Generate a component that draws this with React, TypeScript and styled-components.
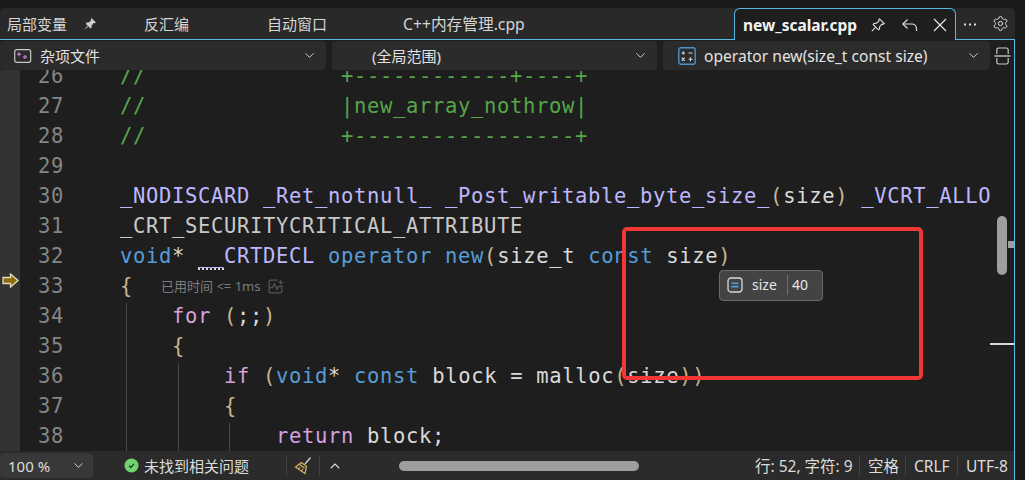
import React from "react";
import styled, { createGlobalStyle } from "styled-components";
import { ChevronDown, ChevronUp, Settings } from "lucide-react";

const Global = createGlobalStyle`
  html, body { margin: 0; padding: 0; background: #1b1b1b; }
  * { box-sizing: border-box; }
`;

const UI = `"Noto Sans", "Noto Sans CJK SC", sans-serif`;
const BLUE = "#56b8e6";

const Window = styled.div`
  width: 1025px;
  height: 480px;
  overflow: hidden;
  background: #1b1b1b;
  padding-top: 8px;
  display: flex;
  flex-direction: column;
  font-family: ${UI};
  color: #e6e6e6;
`;

const TabBar = styled.div`
  height: 31px;
  margin-right: 10px;
  background: #292929;
  border-radius: 6px 6px 0 0;
  display: flex;
  align-items: center;
  padding-left: 7px;
  position: relative;
  z-index: 3;
`;

const ToolTab = styled.div<{ $offset: number; $size?: number }>`
  margin-left: ${(p) => p.$offset}px;
  display: flex;
  align-items: center;
  gap: 16px;
  font-size: ${(p) => p.$size ?? 15}px;
  color: #d6d6d6;
  white-space: nowrap;
`;

const ActiveTab = styled.div`
  position: absolute;
  left: 734px;
  top: 0;
  width: 222px;
  height: 32px;
  background: #1e1e1e;
  border: 1px solid ${BLUE};
  border-bottom: none;
  border-radius: 6px 6px 0 0;
  display: flex;
  align-items: center;
  padding-left: 8px;
  font-size: 15.5px;
  font-weight: 700;
  color: #f2f2f2;
`;

const TabTitle = styled.span`
  width: 127px;
  white-space: nowrap;
`;

const TabIcons = styled.div`
  display: flex;
  align-items: center;
  gap: 15px;
`;

const BarIcons = styled.div`
  position: absolute;
  left: 963px;
  top: 7px;
  display: flex;
  align-items: center;
  gap: 15px;
`;

const Panel = styled.div`
  flex: 1;
  min-height: 0;
  margin-right: 10px;
  border-top: 1px solid ${BLUE};
  border-right: 1px solid ${BLUE};
  display: flex;
  flex-direction: column;
  background: #1e1e1e;
`;

const NavBar = styled.div`
  height: 30px;
  flex: none;
  display: flex;
  gap: 6px;
  background: #1e1e1e;
  position: relative;
  z-index: 2;
  padding-top: 1px;
`;

const NavBox = styled.div<{ $width: number; $pad: number; $size?: number }>`
  width: ${(p) => p.$width}px;
  flex: none;
  height: 29px;
  background: #2b2b2b;
  border-radius: 4px;
  display: flex;
  align-items: center;
  gap: 8px;
  padding: 0 9px 0 ${(p) => p.$pad}px;
  font-size: ${(p) => p.$size ?? 15}px;
  color: #e2e2e2;
  white-space: nowrap;
`;

const NavLabel = styled.span`
  flex: 1;
`;

const Split = styled.div`
  display: flex;
  align-items: center;
  margin-left: -2px;
`;

const Editor = styled.div`
  flex: 1;
  min-height: 0;
  position: relative;
  overflow: hidden;
  background: #1e1e1e;
`;

const Margin = styled.div`
  position: absolute;
  left: 0;
  top: 0;
  bottom: 0;
  width: 20px;
  background: #333333;
`;

const Lines = styled.div`
  width: 992px;
  margin-top: -9px;
  overflow: hidden;
  font-family: "DejaVu Sans Mono", monospace;
  font-size: 20.5px;
  letter-spacing: 0.66px;
  position: relative;
`;

const Line = styled.div`
  height: 30px;
  line-height: 30px;
  display: flex;
  white-space: pre;
`;

const LineNo = styled.span`
  width: 64px;
  flex: none;
  text-align: right;
  color: #858585;
  letter-spacing: 0.66px;
`;

const Code = styled.span`
  margin-left: 56px;
  color: #dadada;
`;

const Tok = styled.span<{ $c: string }>`
  color: ${(p) => p.$c};
`;

const Squiggle = styled.span`
  color: #beb7ff;
  border-bottom: 2px dotted #dadada;
`;

const Hint = styled.span`
  margin-left: 28px;
  font-family: ${UI};
  font-size: 13px;
  letter-spacing: 0;
  color: #7d7d7d;
  display: inline-flex;
  align-items: center;
  gap: 7px;
  height: 30px;
  vertical-align: top;
`;

const Guide = styled.div<{ $x: number; $top: number }>`
  position: absolute;
  left: ${(p) => p.$x}px;
  top: ${(p) => p.$top}px;
  bottom: 0;
  width: 1px;
  background: #474747;
`;

const DebugArrow = styled.svg`
  position: absolute;
  left: 2px;
  top: 203px;
`;

const Tooltip = styled.div`
  position: absolute;
  left: 719px;
  top: 200px;
  width: 104px;
  height: 31px;
  background: #434343;
  border: 1px solid #6a6a6a;
  border-radius: 4px;
  display: flex;
  align-items: center;
  padding: 0 0 2px 7px;
  font-size: 14px;
  color: #e8e8e8;
`;

const TipName = styled.span`
  margin-left: 9px;
  width: 35px;
`;

const TipValue = styled.span`
  border-left: 1px solid #6e6e6e;
  padding-left: 4px;
  line-height: 20px;
`;

const RedBox = styled.div`
  position: absolute;
  left: 622px;
  top: 157px;
  width: 301px;
  height: 153px;
  border: 4px solid #f23535;
  border-radius: 5px;
  z-index: 2;
`;

const ThumbV = styled.div`
  position: absolute;
  left: 997px;
  top: 146px;
  width: 10px;
  height: 59px;
  border-radius: 5px;
  background: #9e9e9e;
`;

const Mark = styled.div<{ $x: number; $y: number; $w: number; $h: number; $c: string }>`
  position: absolute;
  left: ${(p) => p.$x}px;
  top: ${(p) => p.$y}px;
  width: ${(p) => p.$w}px;
  height: ${(p) => p.$h}px;
  background: ${(p) => p.$c};
`;

const StatusBar = styled.div`
  height: 29px;
  flex: none;
  background: #2b2b2b;
  display: flex;
  align-items: center;
  font-size: 15px;
  color: #dcdcdc;
  white-space: nowrap;
`;

const Zoom = styled.div`
  width: 93px;
  height: 25px;
  background: #383838;
  border-radius: 4px;
  display: flex;
  align-items: center;
  justify-content: space-between;
  padding: 0 7px 0 8px;
  margin-right: 31px;
`;

const Problems = styled.div`
  display: flex;
  align-items: center;
  gap: 5px;
  width: 162px;
`;

const Divider = styled.div`
  width: 1px;
  height: 20px;
  background: #424242;
`;

const Tool = styled.div<{ $w: number }>`
  width: ${(p) => p.$w}px;
  display: flex;
  align-items: center;
  justify-content: center;
`;

const HScroll = styled.div`
  width: 240px;
  height: 10px;
  border-radius: 5px;
  background: #9e9e9e;
  margin-left: 49px;
`;

const StatusRight = styled.div`
  margin-left: auto;
  display: flex;
  align-items: center;
  font-size: 15.5px;
`;

const StatusItem = styled.div<{ $w: number }>`
  width: ${(p) => p.$w}px;
  height: 20px;
  line-height: 20px;
  padding-left: 8px;
  & + & {
    border-left: 1px solid #424242;
  }
`;

const C = {
  com: "#57a64a",
  mac: "#beb7ff",
  kw: "#569cd6",
  ctl: "#d8a0df",
  par: "#c9b48f",
  id: "#dadada",
  dim: "#c8c8c8",
};

const P = ({ children }: { children: React.ReactNode }) => <Tok $c={C.par}>{children}</Tok>;

const lines: [number, React.ReactNode][] = [
  [26, <Tok $c={C.com}>{"//               +------------+----+"}</Tok>],
  [27, <Tok $c={C.com}>{"//               |new_array_nothrow|"}</Tok>],
  [28, <Tok $c={C.com}>{"//               +-----------------+"}</Tok>],
  [29, ""],
  [30, <>
    <Tok $c={C.mac}>_NODISCARD _Ret_notnull_ _Post_writable_byte_size_</Tok>
    <P>(</P>size<P>)</P> <Tok $c={C.mac}>_VCRT_ALLOCATOR</Tok>
  </>],
  [31, <Tok $c={C.dim}>_CRT_SECURITYCRITICAL_ATTRIBUTE</Tok>],
  [32, <>
    <Tok $c={C.kw}>void</Tok><Tok $c={C.id}>* </Tok><Squiggle>__</Squiggle><Tok $c={C.mac}>CRTDECL</Tok>{" "}
    <Tok $c={C.kw}>operator new</Tok><P>(</P>size_t <Tok $c={C.kw}>const</Tok> size<P>)</P>
  </>],
  [33, <>
    <P>{"{"}</P>
    <Hint>
      已用时间 {"<="} 1ms
      <svg width="18" height="17" viewBox="0 0 17 16" fill="none" stroke="#555" strokeWidth="1.2">
        <path d="M10 2H3.5Q2 2 2 3.5V12.5Q2 14 3.5 14H12.5Q14 14 14 12.5V9" />
        <path d="M2 9H5L7 5.5L9.5 10.5L11 8H15" />
        <path d="M13 1L13.7 3.3L16 4L13.7 4.7L13 7L12.3 4.7L10 4L12.3 3.3Z" fill="#555" stroke="none" />
      </svg>
    </Hint>
  </>],
  [34, <>{"    "}<Tok $c={C.ctl}>for</Tok> <P>(</P><Tok $c={C.id}>;;</Tok><P>)</P></>],
  [35, <>{"    "}<P>{"{"}</P></>],
  [36, <>
    {"        "}<Tok $c={C.ctl}>if</Tok> <P>(</P><Tok $c={C.kw}>void</Tok>* <Tok $c={C.kw}>const</Tok> block = malloc<P>(</P>size<P>))</P>
  </>],
  [37, <>{"        "}<P>{"{"}</P></>],
  [38, <>{"            "}<Tok $c={C.ctl}>return</Tok> block;</>],
];

const Chevron = () => <ChevronDown size={15} strokeWidth={1.6} color="#d0d0d0" />;

const FilledPin = () => (
  <svg width="14" height="14" viewBox="0 0 14 14" fill="#cfcfcf">
    <path d="M8.5 1L13 5.5L11.7 6.3L10.6 6L8.6 8.8L8.6 10.6L7.4 11.4L2.8 6.8L3.6 5.6L5.4 5.6L8.1 3.4L7.8 2.3Z" />
    <path d="M4.2 9L1 13L5 9.8Z" />
  </svg>
);

const OutlinePin = () => (
  <svg width="16" height="16" viewBox="0 0 16 16" fill="none" stroke="#dcdcdc" strokeWidth="1.1">
    <path d="M9.5 1.8L14.2 6.5L13 7.4L11.8 7.1L9.5 10L9.6 12L8.4 12.8L3.2 7.6L4 6.4L6 6.5L8.9 4.2L8.6 3Z" />
    <path d="M5.6 10.4L1.8 14.2" />
  </svg>
);

const Undo = () => (
  <svg width="17" height="16" viewBox="0 0 17 16" fill="none" stroke="#dcdcdc" strokeWidth="1.2">
    <path d="M6.5 2.5L1.8 7L6.5 11.5" />
    <path d="M2 7H10.5Q15.5 7 15.5 12V14" />
  </svg>
);

const Close = () => (
  <svg width="14" height="14" viewBox="0 0 14 14" fill="none" stroke="#e4e4e4" strokeWidth="1.2">
    <path d="M1 1L13 13M13 1L1 13" />
  </svg>
);

const Dots = () => (
  <svg width="14" height="14" viewBox="0 0 14 14" fill="#dcdcdc">
    <rect x="1" y="6.5" width="2" height="2" />
    <rect x="6" y="6.5" width="2" height="2" />
    <rect x="11" y="6.5" width="2" height="2" />
  </svg>
);

const MiscIcon = () => (
  <svg width="18" height="14" viewBox="0 0 18 14" fill="none">
    <rect x="0.7" y="0.7" width="16" height="12.6" rx="2" stroke="#c8c8c8" strokeWidth="1.2" />
    <path d="M5 3.2V7.2M3 5.2H7M11 6V10M9 8H13" stroke="#b46fd0" strokeWidth="1.4" />
  </svg>
);

const OperatorIcon = () => (
  <svg width="18" height="18" viewBox="0 0 18 18" fill="none">
    <rect x="0.8" y="0.8" width="16.4" height="16.4" rx="2" stroke="#4a94d0" strokeWidth="1.4" />
    <path d="M3.5 6H7M5.25 4.2V7.8M10.5 6H14.5M3.7 10.7L6.8 13.8M6.8 10.7L3.7 13.8M10.5 12.3H14.5M12.5 10.3V14.3" stroke="#cfd8e0" strokeWidth="1.1" />
  </svg>
);

const SplitIcon = () => (
  <svg width="17" height="20" viewBox="0 0 18 20" fill="none" stroke="#d0d0d0" strokeWidth="1.2">
    <path d="M3 8V3.5Q3 1.5 5 1.5H13Q15 1.5 15 3.5V8" />
    <path d="M0.5 10H17.5" strokeWidth="1.4" />
    <path d="M3 12V16.5Q3 18.5 5 18.5H13Q15 18.5 15 16.5V12" />
  </svg>
);

const VarIcon = () => (
  <svg width="16" height="16" viewBox="0 0 16 16" fill="none">
    <rect x="1" y="1" width="14" height="14" rx="3" stroke="#d8d8d8" strokeWidth="1.3" />
    <path d="M4.5 6.2H11.5M4.5 9.6H11.5" stroke="#4f9fdc" strokeWidth="1.6" />
  </svg>
);

const CheckIcon = () => (
  <svg width="15" height="15" viewBox="0 0 15 15">
    <circle cx="7.5" cy="7.5" r="7" fill="#6fd36f" />
    <path d="M5 7.7L6.8 9.5L10 5.8" fill="none" stroke="#1d3a1d" strokeWidth="1.2" />
  </svg>
);

const Broom = () => (
  <svg width="20" height="20" viewBox="0 0 20 20" fill="none" strokeWidth="1.2">
    <path d="M12 8L17.5 1.5" stroke="#d8d8d8" />
    <path d="M8.5 6.5L13.5 10.5L12 17.5L2.5 11L8.5 6.5Z" stroke="#d8b25c" />
    <path d="M6.3 8.2L11.5 12.2M5.5 13L7 11M8.5 15L10 13" stroke="#d8b25c" />
  </svg>
);

export default function App() {
  return (
    <Window>
      <Global />
      <TabBar>
        <ToolTab $offset={0}>局部变量<FilledPin /></ToolTab>
        <ToolTab $offset={47}>反汇编</ToolTab>
        <ToolTab $offset={78}>自动窗口</ToolTab>
        <ToolTab $offset={76} $size={15.7}>C++内存管理.cpp</ToolTab>
        <ActiveTab>
          <TabTitle>new_scalar.cpp</TabTitle>
          <TabIcons>
            <OutlinePin />
            <Undo />
            <Close />
          </TabIcons>
        </ActiveTab>
        <BarIcons>
          <Dots />
          <Settings size={17} strokeWidth={1.4} color="#dcdcdc" />
        </BarIcons>
      </TabBar>
      <Panel>
        <NavBar>
          <NavBox $width={326} $pad={14}>
            <MiscIcon />
            <NavLabel>杂项文件</NavLabel>
            <Chevron />
          </NavBox>
          <NavBox $width={325} $pad={40}>
            <NavLabel>(全局范围)</NavLabel>
            <Chevron />
          </NavBox>
          <NavBox $width={327} $pad={15} $size={15.6}>
            <OperatorIcon />
            <NavLabel>operator new(size_t const size)</NavLabel>
            <Chevron />
          </NavBox>
          <Split><SplitIcon /></Split>
        </NavBar>
        <Editor>
          <Margin />
          <Lines>
            {lines.map(([n, code]) => (
              <Line key={n}>
                <LineNo>{n}</LineNo>
                <Code>{code}</Code>
              </Line>
            ))}
          </Lines>
          <Guide $x={126} $top={233} />
          <Guide $x={178} $top={293} />
          <Guide $x={229} $top={353} />
          <DebugArrow width="17" height="15" viewBox="0 0 17 15">
            <path d="M1 4.5H8.5V1L16 7.5L8.5 14V10.5H1Z" fill="#8a6a12" stroke="#e8dcb8" strokeWidth="1.3" />
          </DebugArrow>
          <Tooltip>
            <VarIcon />
            <TipName>size</TipName>
            <TipValue>40</TipValue>
          </Tooltip>
          <RedBox />
          <ThumbV />
          <Mark $x={1008} $y={171} $w={6} $h={7} $c="#9e9e9e" />
          <Mark $x={990} $y={273} $w={24} $h={2} $c="#d8d8d8" />
        </Editor>
        <StatusBar>
          <Zoom>
            100 %
            <Chevron />
          </Zoom>
          <Problems>
            <CheckIcon />
            未找到相关问题
          </Problems>
          <Divider />
          <Tool $w={32}><Broom /></Tool>
          <Divider />
          <Tool $w={30}><ChevronUp size={16} strokeWidth={1.6} color="#d8d8d8" /></Tool>
          <HScroll />
          <StatusRight>
            <StatusItem $w={112}>行: 52, 字符: 9</StatusItem>
            <StatusItem $w={46}>空格</StatusItem>
            <StatusItem $w={52}>CRLF</StatusItem>
            <StatusItem $w={57}>UTF-8</StatusItem>
          </StatusRight>
        </StatusBar>
      </Panel>
    </Window>
  );
}
